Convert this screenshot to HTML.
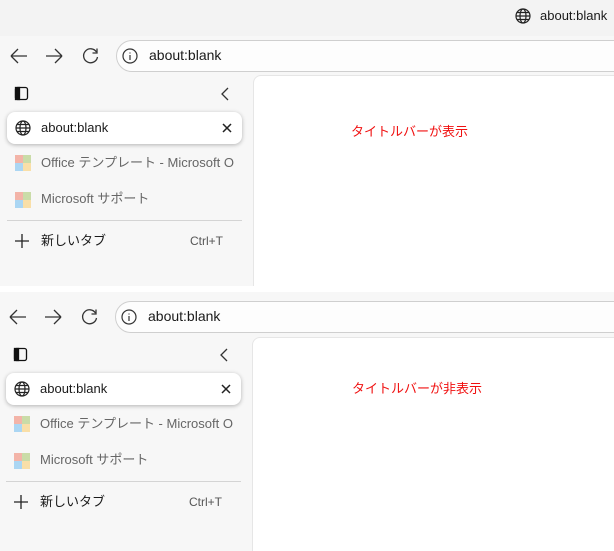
<!DOCTYPE html>
<html><head><meta charset="utf-8"><style>
*{margin:0;padding:0;box-sizing:border-box}
html,body{width:614px;height:551px;overflow:hidden}
body{background:#fff;font-family:"Segoe UI","Liberation Sans","Noto Sans CJK JP",sans-serif;position:relative}
.a{position:absolute}
.p{position:absolute;left:0;width:614px;background:#f7f7f7;overflow:hidden}
.t{font-size:13px;color:#1a1a1a;line-height:16px;white-space:nowrap}
.g{color:#666}
.clip{overflow:hidden;width:193px}
.addr{position:absolute;height:32px;width:520px;border:1px solid #cfcfcf;border-radius:16px;background:#fdfdfd}
.content{position:absolute;background:#fff;border:1px solid #e6e6e6;border-radius:8px 0 0 0;width:400px}
.card{position:absolute;width:235px;height:32px;background:#fff;border-radius:8px;box-shadow:0 1px 4px rgba(0,0,0,.28)}
.ms{position:absolute;width:16px;height:16px}
.ms i{position:absolute;width:8px;height:8px}
.red{position:absolute;color:#f01010;font-size:13px;font-family:"Liberation Sans","Noto Sans CJK JP",sans-serif;white-space:nowrap}
</style></head><body>
<svg width="0" height="0" style="position:absolute"><defs>
<g id="globe" fill="none" stroke="#222" stroke-width="1.2"><circle cx="8" cy="8" r="7"/><ellipse cx="8" cy="8" rx="3" ry="7"/><path d="M1 8h14M2 4.5h12M2 11.5h12"/></g>
</defs></svg>

<div class="p" style="top:0;height:36px;background:#f3f3f3"></div>
<svg class="a" style="left:515px;top:8px" width="16" height="16"><use href="#globe"/></svg>
<div class="a t" style="left:540px;top:8px">about:blank</div>

<div class="p" style="top:36px;height:250px"></div>

<div class="a" style="left:0;top:0;width:614px;height:286px;overflow:hidden">
 <svg class="a" style="left:9px;top:47px" width="20" height="18" fill="none" stroke="#333" stroke-width="1.3"><path d="M2 9h16M2 9l7-7M2 9l7 7"/></svg>
 <svg class="a" style="left:44px;top:47px" width="20" height="18" fill="none" stroke="#333" stroke-width="1.3"><path d="M2 9h16M18 9l-7-7M18 9l-7 7"/></svg>
 <svg class="a" style="left:81px;top:47px" width="20" height="20" fill="none" stroke="#333" stroke-width="1.3"><path d="M15.5 5A7 7 0 1 0 16.5 10"/><path d="M16 1.5v4.5h-4.5"/></svg>
 <div class="addr" style="left:116px;top:40px"></div>
 <svg class="a" style="left:122px;top:48px" width="16" height="16" fill="none" stroke="#333" stroke-width="1.2"><circle cx="8" cy="8" r="7"/><path d="M8 7v5M8 4.5v1"/></svg>
 <div class="a t" style="left:149px;top:47px;font-size:14px">about:blank</div>
 <div class="content" style="left:253px;top:75px;height:220px"></div>
 <svg class="a" style="left:14px;top:86px" width="16" height="16" fill="none" stroke="#111" stroke-width="1.3"><rect x="1.5" y="1.5" width="12" height="12" rx="2"/><rect x="1.5" y="1.5" width="4" height="12" fill="#111"/></svg>
 <svg class="a" style="left:219px;top:87px" width="12" height="14" fill="none" stroke="#333" stroke-width="1.3"><path d="M9 1L3 7l6 6"/></svg>
 <div class="card" style="left:7px;top:112px"></div>
 <svg class="a" style="left:15px;top:120px" width="16" height="16"><use href="#globe"/></svg>
 <div class="a t" style="left:41px;top:120px">about:blank</div>
 <svg class="a" style="left:221px;top:122px" width="12" height="12" stroke="#222" stroke-width="1.5"><path d="M2 2l8 8M10 2l-8 8"/></svg>
 <div class="ms" style="left:15px;top:155px"><i style="left:0;top:0;background:#f3b4a8"></i><i style="left:8px;top:0;background:#cadca8"></i><i style="left:0;top:8px;background:#abd6f3"></i><i style="left:8px;top:8px;background:#f9dfa8"></i></div>
 <div class="a t g clip" style="left:41px;top:155px">Office テンプレート - Microsoft Office の</div>
 <div class="ms" style="left:15px;top:192px"><i style="left:0;top:0;background:#f3b4a8"></i><i style="left:8px;top:0;background:#cadca8"></i><i style="left:0;top:8px;background:#abd6f3"></i><i style="left:8px;top:8px;background:#f9dfa8"></i></div>
 <div class="a t g" style="left:41px;top:191px">Microsoft サポート</div>
 <div class="a" style="left:7px;top:220px;width:235px;height:1px;background:#d4d4d4"></div>
 <svg class="a" style="left:14px;top:233px" width="16" height="16" stroke="#222" stroke-width="1.3"><path d="M8 1v14M1 8h14"/></svg>
 <div class="a t" style="left:41px;top:233px">新しいタブ</div>
 <div class="a t" style="left:190px;top:233px;color:#555;font-size:12px">Ctrl+T</div>
 <div class="red" style="left:351px;top:121px">タイトルバーが表示</div>
</div>

<div class="p" style="top:292px;height:259px"></div>
<div class="a" style="left:-1px;top:261px;width:615px;height:290px;overflow:hidden">
 <svg class="a" style="left:9px;top:47px" width="20" height="18" fill="none" stroke="#333" stroke-width="1.3"><path d="M2 9h16M2 9l7-7M2 9l7 7"/></svg>
 <svg class="a" style="left:44px;top:47px" width="20" height="18" fill="none" stroke="#333" stroke-width="1.3"><path d="M2 9h16M18 9l-7-7M18 9l-7 7"/></svg>
 <svg class="a" style="left:81px;top:47px" width="20" height="20" fill="none" stroke="#333" stroke-width="1.3"><path d="M15.5 5A7 7 0 1 0 16.5 10"/><path d="M16 1.5v4.5h-4.5"/></svg>
 <div class="addr" style="left:116px;top:40px"></div>
 <svg class="a" style="left:122px;top:48px" width="16" height="16" fill="none" stroke="#333" stroke-width="1.2"><circle cx="8" cy="8" r="7"/><path d="M8 7v5M8 4.5v1"/></svg>
 <div class="a t" style="left:149px;top:47px;font-size:14px">about:blank</div>
 <div class="content" style="left:253px;top:76px;height:230px"></div>
 <svg class="a" style="left:14px;top:86px" width="16" height="16" fill="none" stroke="#111" stroke-width="1.3"><rect x="1.5" y="1.5" width="12" height="12" rx="2"/><rect x="1.5" y="1.5" width="4" height="12" fill="#111"/></svg>
 <svg class="a" style="left:219px;top:87px" width="12" height="14" fill="none" stroke="#333" stroke-width="1.3"><path d="M9 1L3 7l6 6"/></svg>
 <div class="card" style="left:7px;top:112px"></div>
 <svg class="a" style="left:15px;top:120px" width="16" height="16"><use href="#globe"/></svg>
 <div class="a t" style="left:41px;top:120px">about:blank</div>
 <svg class="a" style="left:221px;top:122px" width="12" height="12" stroke="#222" stroke-width="1.5"><path d="M2 2l8 8M10 2l-8 8"/></svg>
 <div class="ms" style="left:15px;top:155px"><i style="left:0;top:0;background:#f3b4a8"></i><i style="left:8px;top:0;background:#cadca8"></i><i style="left:0;top:8px;background:#abd6f3"></i><i style="left:8px;top:8px;background:#f9dfa8"></i></div>
 <div class="a t g clip" style="left:41px;top:155px">Office テンプレート - Microsoft Office の</div>
 <div class="ms" style="left:15px;top:192px"><i style="left:0;top:0;background:#f3b4a8"></i><i style="left:8px;top:0;background:#cadca8"></i><i style="left:0;top:8px;background:#abd6f3"></i><i style="left:8px;top:8px;background:#f9dfa8"></i></div>
 <div class="a t g" style="left:41px;top:191px">Microsoft サポート</div>
 <div class="a" style="left:7px;top:220px;width:235px;height:1px;background:#d4d4d4"></div>
 <svg class="a" style="left:14px;top:233px" width="16" height="16" stroke="#222" stroke-width="1.3"><path d="M8 1v14M1 8h14"/></svg>
 <div class="a t" style="left:41px;top:233px">新しいタブ</div>
 <div class="a t" style="left:190px;top:233px;color:#555;font-size:12px">Ctrl+T</div>
 <div class="red" style="left:353px;top:117px">タイトルバーが非表示</div>
</div>
</body></html>
